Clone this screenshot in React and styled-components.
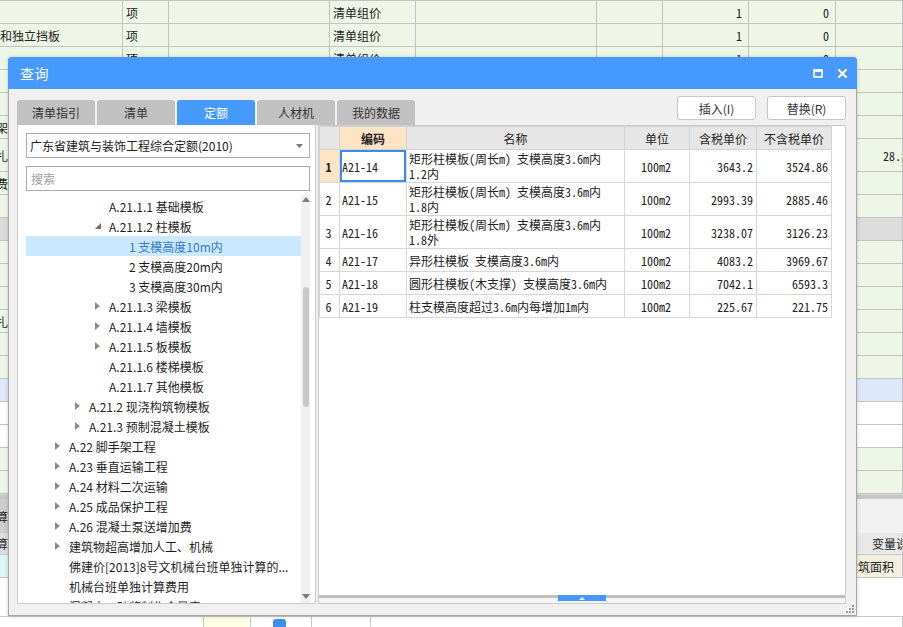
import React from "react";
import styled, { createGlobalStyle } from "styled-components";

const UI = `"Noto Sans CJK SC", "Microsoft YaHei", sans-serif`;
const MONO = `"Noto Sans Mono CJK SC", "Noto Sans CJK SC", monospace`;

const GlobalStyle = createGlobalStyle`
  html, body { margin: 0; padding: 0; }
  body { font-family: ${UI}; font-size: 12px; color: #222; }
`;

/* ---------- background sheet ---------- */

const bgRows = [
  { h: 23, c: ["", "项", "", "清单组价", "", "", "1", "0"] },
  { h: 23, c: ["和独立挡板", "项", "", "清单组价", "", "", "1", "0"] },
  { h: 23, c: ["", "项", "", "清单组价", "", "", "1", "0"] },
  { h: 23, c: [] },
  { h: 23, c: [] },
  { h: 23, c: ["架"], cut: true },
  { h: 33, c: ["扎", "", "", "", "", "", "", "", "28.56"], cut: true },
  { h: 23, c: ["费"], cut: true },
  { h: 23, c: [] },
  { h: 23, c: [], bg: "#dcdcdc" },
  { h: 23, c: [] },
  { h: 23, c: [] },
  { h: 23, c: [] },
  { h: 23, c: ["扎"], cut: true },
  { h: 23, c: [] },
  { h: 23, c: [] },
  { h: 23, c: [], bg: "#dde8fb" },
  { h: 23, c: [], bg: "#ffffff" },
  { h: 23, c: [], bg: "#ffffff" },
  { h: 23, c: [] },
  { h: 23, c: [] },
];

const Screen = styled.div`
  position: relative;
  width: 903px;
  height: 627px;
  overflow: hidden;
  background: #fff;
`;

const Sheet = styled.div`
  display: flex;
  flex-direction: column;
  border-top: 1px solid #c3c3c3;
`;

const BgRow = styled.div`
  display: grid;
  grid-template-columns: 123px 46px 161px 86px 181px 66px 86px 87px 1fr;
  height: ${(p) => p.$h}px;
  box-sizing: border-box;
  border-bottom: 1px solid #c3c3c3;
  background: ${(p) => p.$bg || "#eef7e7"};
`;

const BgCell = styled.div`
  display: flex;
  align-items: center;
  justify-content: ${(p) => (p.$num ? "flex-end" : "flex-start")};
  padding: 0 ${(p) => (p.$num ? 6 : 3)}px 0 ${(p) => (p.$first ? 0 : p.$pad || 3)}px;
  border-right: 1px solid #c3c3c3;
  overflow: hidden;
  white-space: nowrap;
  font-family: ${(p) => (p.$mono ? MONO : UI)};
  font-size: 12px;
  color: #222;
  text-indent: ${(p) => (p.$cut ? -4 : 0)}px;
`;

const Separator = styled.div`
  height: 5px;
  background: #c6c6c6;
  border-top: 1px solid #d8d8d8;
  box-sizing: border-box;
`;

const Toolbar = styled.div`
  height: 34px;
  background: #f2f2f2;
  display: flex;
`;

const SideTab = styled.div`
  width: 40px;
  display: flex;
  align-items: center;
  background: #cdcdcd;
  text-indent: -16px;
  overflow: hidden;
  white-space: nowrap;
  font-size: 12px;
`;

const LowerHead = styled.div`
  height: 22px;
  display: flex;
  background: #e8e8e8;
  border-bottom: 1px solid #c8c8c8;
  box-sizing: border-box;
  font-size: 12px;
  color: #222;
`;

const LowerCell = styled.div`
  width: ${(p) => p.$w}px;
  flex: ${(p) => (p.$w ? "none" : 1)};
  display: flex;
  align-items: center;
  padding-left: ${(p) => p.$pad || 0}px;
  background: ${(p) => p.$bg || "transparent"};
  border-right: 1px solid #c8c8c8;
  overflow: hidden;
  white-space: nowrap;
  text-indent: ${(p) => (p.$cut ? -16 : 0)}px;
`;

const LowerRow = styled.div`
  height: ${(p) => p.$h}px;
  display: flex;
  border-bottom: 1px solid #c8c8c8;
  box-sizing: border-box;
  font-size: 12px;
`;

const Check = styled.div`
  width: 13px;
  height: 13px;
  margin: 6px 0 0 22px;
  border-radius: 3px;
  background: #3d8ef0;
`;

function Background() {
  return (
    <Sheet>
      {bgRows.map((r, i) => (
        <BgRow key={i} $h={r.h} $bg={r.bg}>
          {Array.from({ length: 9 }).map((_, j) => (
            <BgCell
              key={j}
              $first={j === 0}
              $cut={j === 0 && r.cut}
              $num={j === 6 || j === 7}
              $mono={j >= 6}
              $pad={j === 8 ? 47 : 3}
            >
              {r.c[j] || ""}
            </BgCell>
          ))}
        </BgRow>
      ))}
      <Separator />
      <Toolbar>
        <SideTab>计算</SideTab>
      </Toolbar>
      <LowerHead>
        <LowerCell $w={40} $cut $bg="#dedede">计算</LowerCell>
        <LowerCell $w={796} />
        <LowerCell $pad={34}>变量说明</LowerCell>
      </LowerHead>
      <LowerRow $h={23}>
        <LowerCell $w={500} $bg="#dcf6f6" />
        <LowerCell $pad={345} $bg="#f3f0e1">建筑面积</LowerCell>
      </LowerRow>
      <LowerRow $h={39} />
      <LowerRow $h={11}>
        <LowerCell $w={203} />
        <LowerCell $w={46} $bg="#ffffe6" />
        <LowerCell $w={60}>
          <Check />
        </LowerCell>
        <LowerCell $w={58} />
        <LowerCell />
      </LowerRow>
    </Sheet>
  );
}

/* ---------- dialog ---------- */

const Dialog = styled.div`
  position: absolute;
  left: 8px;
  top: 57px;
  width: 849px;
  height: 559px;
  box-sizing: border-box;
  display: flex;
  flex-direction: column;
  background: #f0f0f0;
  border: 1px solid #a6a6a6;
  border-top: none;
  border-radius: 4px 4px 0 0;
  box-shadow: 0 0 4px rgba(0, 0, 0, 0.18);
`;

const TitleBar = styled.div`
  height: 32px;
  margin: 0 -1px;
  display: flex;
  align-items: center;
  padding: 0 10px 0 12px;
  background: #4599ff;
  border-radius: 4px 4px 0 0;
  color: #fff;
  font-size: 14px;
`;

const Title = styled.div`
  flex: 1;
  letter-spacing: 0.5px;
`;

const TitleIcons = styled.div`
  display: flex;
  align-items: center;
  gap: 15px;
`;

const Body = styled.div`
  flex: 1;
  display: flex;
  flex-direction: column;
  padding: 7px 10px 11px 8px;
  min-height: 0;
`;

const TopRow = styled.div`
  height: 29px;
  display: flex;
  justify-content: space-between;
`;

const Tabs = styled.div`
  display: flex;
  gap: 2px;
  align-self: flex-end;
`;

const Tab = styled.div`
  width: 78px;
  height: 25px;
  display: flex;
  align-items: center;
  justify-content: center;
  border-radius: 3px 3px 0 0;
  background: ${(p) => (p.$active ? "#4599ff" : "#c1c1c1")};
  color: ${(p) => (p.$active ? "#fff" : "#333")};
  font-size: 12px;
`;

const Buttons = styled.div`
  display: flex;
  gap: 11px;
  align-self: flex-start;
`;

const Button = styled.button`
  width: 79px;
  height: 24px;
  padding: 0;
  background: #fff;
  border: 1px solid #c6c6c6;
  border-radius: 3px;
  font-family: ${UI};
  font-size: 12px;
  color: #333;
`;

const Panels = styled.div`
  flex: 1;
  display: flex;
  gap: 2px;
  min-height: 0;
`;

const LeftPanel = styled.div`
  width: 299px;
  box-sizing: border-box;
  display: flex;
  flex-direction: column;
  gap: 8px;
  padding: 8px 5px 0 8px;
  background: #fff;
  border: 1px solid #cbcbcb;
  border-top: none;
`;

const Select = styled.div`
  height: 25px;
  box-sizing: border-box;
  display: flex;
  align-items: center;
  justify-content: space-between;
  padding: 0 6px 0 3px;
  border: 1px solid #aaaaaa;
  font-size: 12px;
  color: #222;
`;

const Search = styled.div`
  height: 25px;
  box-sizing: border-box;
  display: flex;
  align-items: center;
  padding-left: 4px;
  border: 1px solid #aaaaaa;
  font-size: 12px;
  color: #a0a0a0;
`;

const TreeBox = styled.div`
  flex: 1;
  display: flex;
  margin-top: -4px;
  min-height: 0;
`;

const TreeList = styled.div`
  flex: 1;
  padding-top: 1px;
  overflow: hidden;
`;

const TreeRow = styled.div`
  height: 20px;
  display: flex;
  align-items: center;
  padding-left: ${(p) => 29 + (p.$lv - 2) * 20}px;
  background: ${(p) => (p.$sel ? "#cce8ff" : "transparent")};
  color: ${(p) => (p.$sel ? "#2f7bd0" : "#1e1e1e")};
  font-size: 12px;
  white-space: nowrap;
`;

const Toggle = styled.span`
  width: 14px;
  flex: none;
  display: flex;
  align-items: center;
`;

const VScroll = styled.div`
  width: 9px;
  display: flex;
  flex-direction: column;
  align-items: center;
  background: #f0f0f0;
`;

const Thumb = styled.div`
  width: 6px;
  height: 120px;
  margin-top: 85px;
  border-radius: 3px;
  background: #c8c8c8;
`;

const RightPanel = styled.div`
  flex: 1;
  display: flex;
  flex-direction: column;
  background: #fff;
  border: 1px solid #cbcbcb;
  min-width: 0;
`;

const TableArea = styled.div`
  flex: 1;
  overflow: hidden;
`;

const Grid = styled.table`
  border-collapse: collapse;
  table-layout: fixed;
  width: 512px;
  font-size: 12px;
`;

const Th = styled.th`
  height: 22px;
  padding: 0;
  border: 1px solid #d2d2d2;
  background: ${(p) => (p.$hot ? "#fde4c5" : "#e6e6e6")};
  font-family: ${UI};
  font-size: 12px;
  font-weight: ${(p) => (p.$hot ? 700 : 400)};
  color: #222;
  text-align: center;
`;

const Td = styled.td`
  padding: 0 ${(p) => (p.$align === "right" ? 3 : 2)}px 0 ${(p) => (p.$align === "left" ? 2 : 0)}px;
  border: 1px solid #d6d6d6;
  font-family: ${MONO};
  font-size: 12px;
  line-height: 15px;
  color: #222;
  text-align: ${(p) => p.$align || "center"};
  white-space: nowrap;
  background: ${(p) => (p.$hot ? "#fde4c5" : "#fff")};
  font-weight: ${(p) => (p.$hot ? 700 : 400)};
  box-shadow: ${(p) => (p.$focus ? "inset 0 0 0 2px #3d8ce8" : "none")};
`;

const NameLine = styled.div`
  line-height: 15px;
`;

const Splitter = styled.div`
  height: 8px;
  display: flex;
  justify-content: center;
  background: linear-gradient(#bfbfbf 0 3px, #f4f4f4 3px);
`;

const Handle = styled.div`
  width: 48px;
  height: 6px;
  display: flex;
  align-items: center;
  justify-content: center;
  background: #4599ff;
`;

const Grip = styled.svg`
  position: absolute;
  right: 2px;
  bottom: 2px;
`;

const Collapsed = () => (
  <svg width="5" height="8" viewBox="0 0 5 8">
    <polygon points="0,0 5,4 0,8" fill="#8c8c8c" />
  </svg>
);

const Expanded = () => (
  <svg width="6" height="6" viewBox="0 0 6 6">
    <polygon points="6,0 6,6 0,6" fill="#707070" />
  </svg>
);

const tree = [
  { t: "A.21.1.1 基础模板", lv: 4 },
  { t: "A.21.1.2 柱模板", lv: 4, open: true },
  { t: "1 支模高度10m内", lv: 5, sel: true },
  { t: "2 支模高度20m内", lv: 5 },
  { t: "3 支模高度30m内", lv: 5 },
  { t: "A.21.1.3 梁模板", lv: 4, closed: true },
  { t: "A.21.1.4 墙模板", lv: 4, closed: true },
  { t: "A.21.1.5 板模板", lv: 4, closed: true },
  { t: "A.21.1.6 楼梯模板", lv: 4 },
  { t: "A.21.1.7 其他模板", lv: 4 },
  { t: "A.21.2 现浇构筑物模板", lv: 3, closed: true },
  { t: "A.21.3 预制混凝土模板", lv: 3, closed: true },
  { t: "A.22 脚手架工程", lv: 2, closed: true },
  { t: "A.23 垂直运输工程", lv: 2, closed: true },
  { t: "A.24 材料二次运输", lv: 2, closed: true },
  { t: "A.25 成品保护工程", lv: 2, closed: true },
  { t: "A.26 混凝土泵送增加费", lv: 2, closed: true },
  { t: "建筑物超高增加人工、机械", lv: 2, closed: true },
  { t: "佛建价[2013]8号文机械台班单独计算的...", lv: 2 },
  { t: "机械台班单独计算费用", lv: 2 },
  { t: "混凝土、砂浆制作含量表", lv: 2 },
];

const items = [
  { code: "A21-14", name: ["矩形柱模板(周长m) 支模高度3.6m内", "1.2内"], p1: "3643.2", p2: "3524.86" },
  { code: "A21-15", name: ["矩形柱模板(周长m) 支模高度3.6m内", "1.8内"], p1: "2993.39", p2: "2885.46" },
  { code: "A21-16", name: ["矩形柱模板(周长m) 支模高度3.6m内", "1.8外"], p1: "3238.07", p2: "3126.23" },
  { code: "A21-17", name: ["异形柱模板 支模高度3.6m内"], p1: "4083.2", p2: "3969.67" },
  { code: "A21-18", name: ["圆形柱模板(木支撑) 支模高度3.6m内"], p1: "7042.1", p2: "6593.3" },
  { code: "A21-19", name: ["柱支模高度超过3.6m内每增加1m内"], p1: "225.67", p2: "221.75" },
];

export default function App() {
  return (
    <>
      <GlobalStyle />
      <Screen>
        <Background />
        <Dialog>
          <TitleBar>
            <Title>查询</Title>
            <TitleIcons>
              <svg width="10" height="9" viewBox="0 0 10 9">
                <rect x="1" y="1.5" width="8" height="6.5" fill="none" stroke="#fff" strokeWidth="1.6" />
                <rect x="0.2" y="0.2" width="9.6" height="2.6" fill="#fff" />
              </svg>
              <svg width="9" height="9" viewBox="0 0 9 9">
                <path d="M1 1 L8 8 M8 1 L1 8" stroke="#fff" strokeWidth="2.2" strokeLinecap="square" />
              </svg>
            </TitleIcons>
          </TitleBar>
          <Body>
            <TopRow>
              <Tabs>
                <Tab>清单指引</Tab>
                <Tab>清单</Tab>
                <Tab $active>定额</Tab>
                <Tab>人材机</Tab>
                <Tab>我的数据</Tab>
              </Tabs>
              <Buttons>
                <Button>插入(I)</Button>
                <Button>替换(R)</Button>
              </Buttons>
            </TopRow>
            <Panels>
              <LeftPanel>
                <Select>
                  <span>广东省建筑与装饰工程综合定额(2010)</span>
                  <svg width="7" height="4" viewBox="0 0 7 4">
                    <polygon points="0,0 7,0 3.5,4" fill="#7a7a7a" />
                  </svg>
                </Select>
                <Search>搜索</Search>
                <TreeBox>
                  <TreeList>
                    {tree.map((n, i) => (
                      <TreeRow key={i} $lv={n.lv} $sel={n.sel}>
                        <Toggle>
                          {n.closed && <Collapsed />}
                          {n.open && <Expanded />}
                        </Toggle>
                        {n.t}
                      </TreeRow>
                    ))}
                  </TreeList>
                  <VScroll>
                    <svg width="8" height="5" viewBox="0 0 8 5" style={{ marginTop: 2 }}>
                      <polygon points="0,5 8,5 4,0" fill="#7a7a7a" />
                    </svg>
                    <Thumb />
                    <div style={{ flex: 1 }} />
                    <svg width="8" height="5" viewBox="0 0 8 5" style={{ marginBottom: 4 }}>
                      <polygon points="0,0 8,0 4,5" fill="#7a7a7a" />
                    </svg>
                  </VScroll>
                </TreeBox>
              </LeftPanel>
              <RightPanel>
                <TableArea>
                  <Grid>
                    <colgroup>
                      <col style={{ width: 20 }} />
                      <col style={{ width: 67 }} />
                      <col style={{ width: 218 }} />
                      <col style={{ width: 65 }} />
                      <col style={{ width: 67 }} />
                      <col style={{ width: 75 }} />
                    </colgroup>
                    <thead>
                      <tr>
                        <Th />
                        <Th $hot>编码</Th>
                        <Th>名称</Th>
                        <Th>单位</Th>
                        <Th>含税单价</Th>
                        <Th>不含税单价</Th>
                      </tr>
                    </thead>
                    <tbody>
                      {items.map((it, i) => (
                        <tr key={it.code} style={{ height: it.name.length > 1 ? 33 : 23 }}>
                          <Td $hot={i === 0}>{i + 1}</Td>
                          <Td $align="left" $focus={i === 0}>{it.code}</Td>
                          <Td $align="left">
                            {it.name.map((l, k) => (
                              <NameLine key={k}>{l}</NameLine>
                            ))}
                          </Td>
                          <Td>100m2</Td>
                          <Td $align="right">{it.p1}</Td>
                          <Td $align="right">{it.p2}</Td>
                        </tr>
                      ))}
                    </tbody>
                  </Grid>
                </TableArea>
                <Splitter>
                  <Handle>
                    <svg width="8" height="5" viewBox="0 0 8 5">
                      <polygon points="1,4 7,4 4,1" fill="#fff" />
                    </svg>
                  </Handle>
                </Splitter>
              </RightPanel>
            </Panels>
          </Body>
          <Grip width="8" height="8" viewBox="0 0 8 8">
            <g fill="#9a9a9a">
              <rect x="6" y="0" width="2" height="2" />
              <rect x="3" y="3" width="2" height="2" />
              <rect x="6" y="3" width="2" height="2" />
              <rect x="0" y="6" width="2" height="2" />
              <rect x="3" y="6" width="2" height="2" />
              <rect x="6" y="6" width="2" height="2" />
            </g>
          </Grip>
        </Dialog>
      </Screen>
    </>
  );
}
